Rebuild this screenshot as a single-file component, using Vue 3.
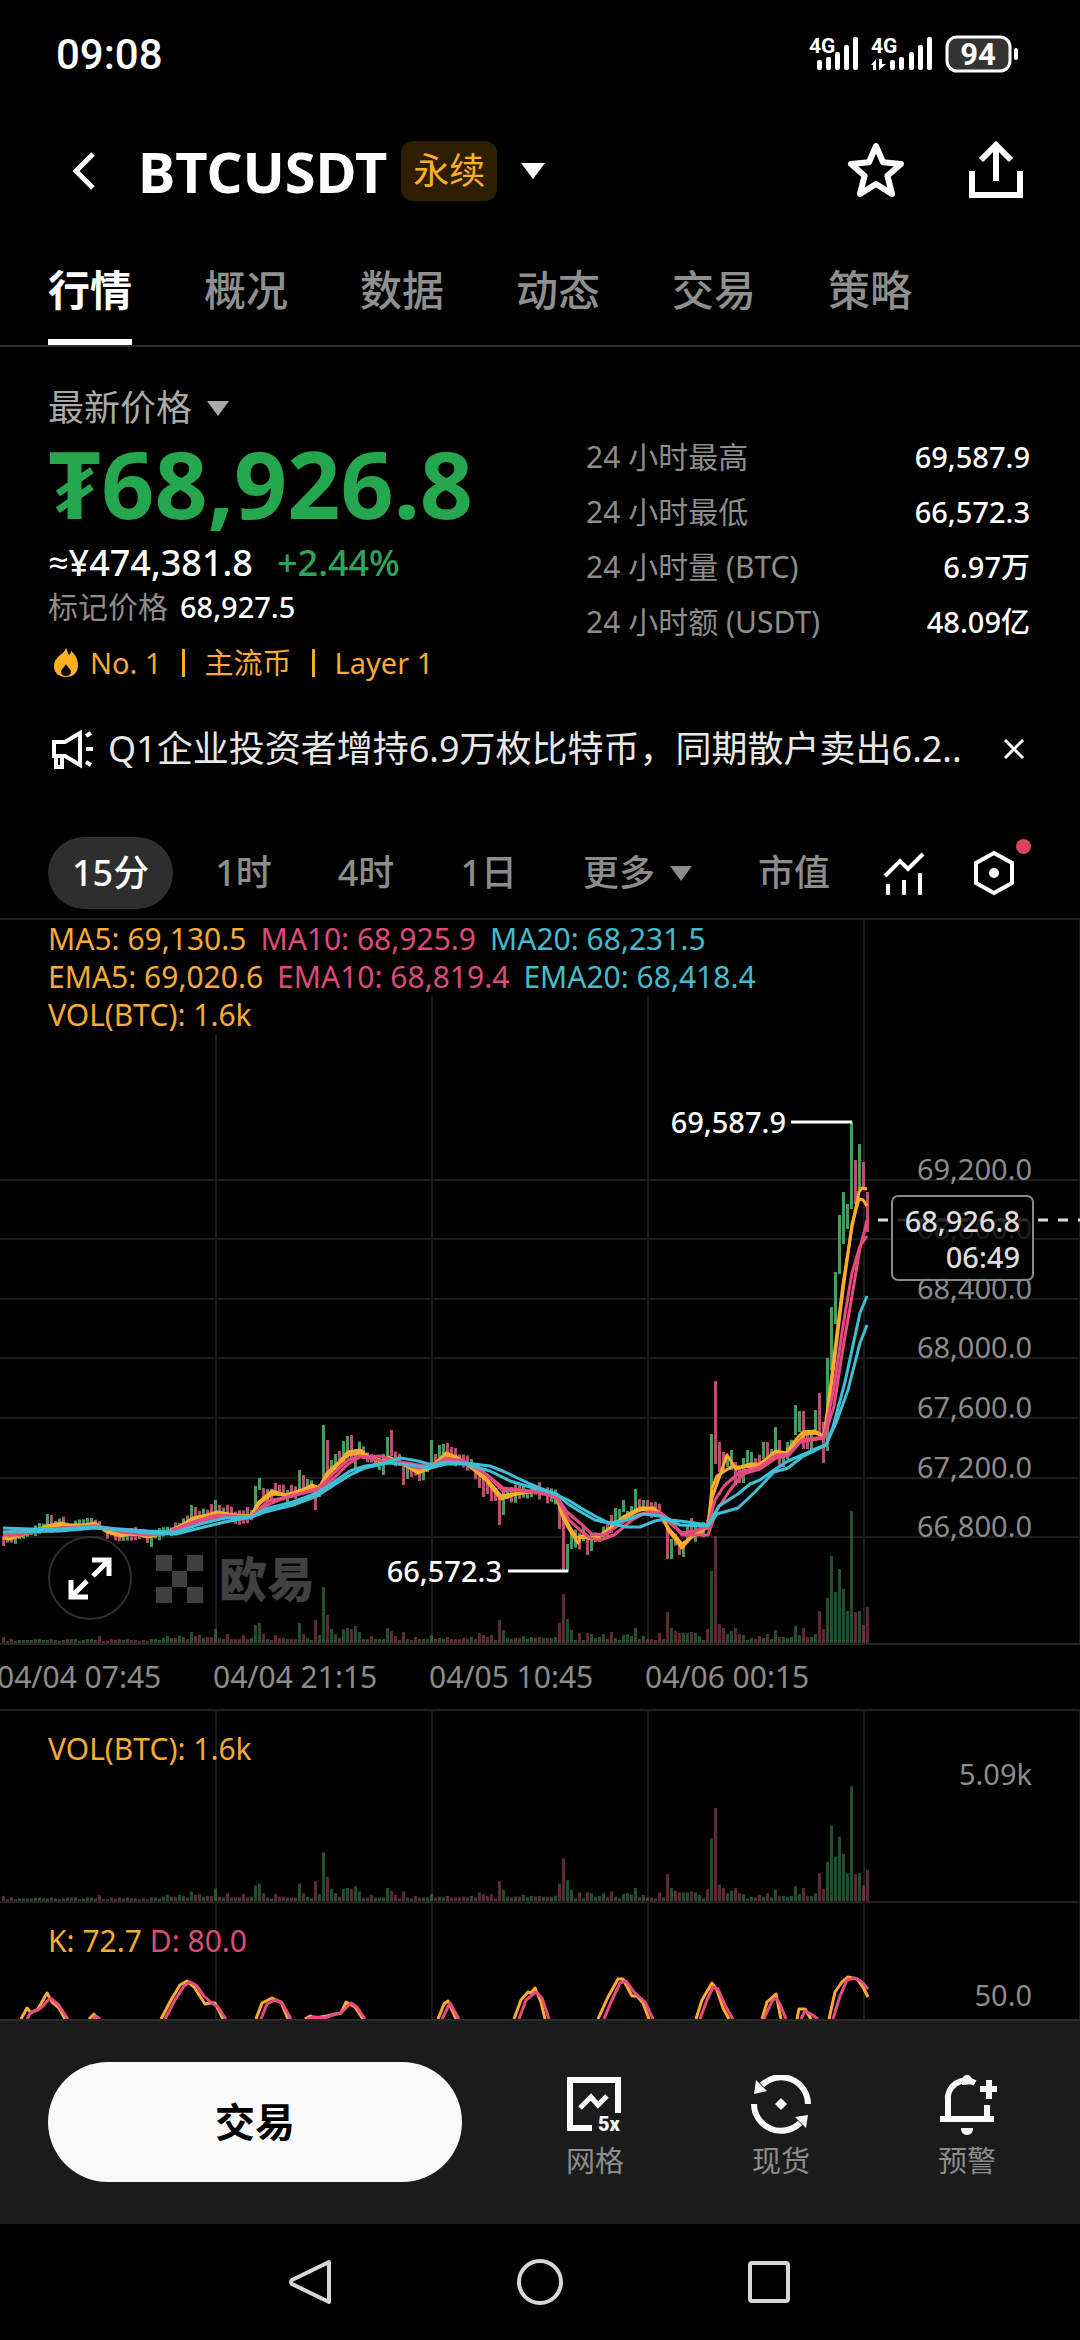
<script setup>
import { ref } from 'vue'

const tabs = ['行情', '概况', '数据', '动态', '交易', '策略']
const activeTab = ref('行情')

const stats = [
  { label: '24 小时最高', value: '69,587.9' },
  { label: '24 小时最低', value: '66,572.3' },
  { label: '24 小时量 (BTC)', value: '6.97万' },
  { label: '24 小时额 (USDT)', value: '48.09亿' },
]

const frames = ['15分', '1时', '4时', '1日']
const activeFrame = ref('15分')
const noticeOpen = ref(true)

const legend = [
  [
    { text: 'MA5: 69,130.5', tone: 'amber' },
    { text: 'MA10: 68,925.9', tone: 'pink' },
    { text: 'MA20: 68,231.5', tone: 'cyan' },
  ],
  [
    { text: 'EMA5: 69,020.6', tone: 'amber' },
    { text: 'EMA10: 68,819.4', tone: 'pink' },
    { text: 'EMA20: 68,418.4', tone: 'cyan' },
  ],
  [{ text: 'VOL(BTC): 1.6k', tone: 'amber' }],
]

const dates = ['04/04 07:45', '04/04 21:15', '04/05 10:45', '04/06 00:15']
const gridX = [216, 432, 648, 864, 1080]
const prices = [
  { y: 262, text: '69,200.0' },
  { y: 321, text: '68,800.0' },
  { y: 381, text: '68,400.0' },
  { y: 440, text: '68,000.0' },
  { y: 500, text: '67,600.0' },
  { y: 560, text: '67,200.0' },
  { y: 619, text: '66,800.0' },
]

const ma5 = [[3,620],[10,621],[19,618],[38,612],[46,608],[62,605],[74,609],[95,605],[107,614],[121,618],[134,615],[148,619],[165,615],[179,609],[193,600],[207,597],[217,594],[234,597],[251,598],[258,585],[272,573],[286,577],[296,575],[312,567],[319,570],[327,555],[339,544],[348,534],[360,532],[367,538],[382,545],[389,539],[401,545],[418,555],[430,550],[446,535],[458,540],[472,550],[486,562],[501,581],[513,577],[527,574],[540,572],[547,576],[557,580],[562,597],[569,611],[578,625],[581,618],[592,621],[602,617],[623,599],[640,590],[654,590],[661,597],[669,613],[682,630],[692,618],[702,614],[708,607],[712,580],[719,560],[727,537],[736,551],[750,546],[760,546],[776,533],[786,535],[798,519],[803,514],[815,513],[824,519],[831,464],[836,423],[843,366],[852,309],[859,274],[862,270],[867,271]]
const ema5 = [[3,617],[19,617],[46,609],[62,607],[95,607],[107,612],[121,616],[148,617],[165,615],[193,602],[217,596],[251,598],[260,585],[272,576],[286,577],[312,569],[319,570],[329,556],[348,537],[360,535],[382,543],[389,540],[401,545],[418,552],[430,549],[446,537],[458,541],[472,549],[486,560],[501,578],[513,576],[540,573],[557,580],[562,594],[569,608],[576,619],[592,620],[602,616],[623,601],[640,592],[654,591],[661,597],[669,611],[682,626],[692,619],[708,608],[712,570],[717,558],[731,549],[740,549],[760,548],[776,535],[786,536],[798,524],[805,516],[815,515],[824,518],[829,485],[835,438],[843,372],[852,306],[859,281],[863,282],[867,288]]
const ma10 = [[3,617],[19,617],[46,612],[74,610],[95,608],[107,610],[121,614],[148,617],[165,616],[179,612],[193,605],[217,599],[251,600],[265,588],[279,582],[293,577],[308,574],[319,572],[334,560],[348,546],[360,539],[380,538],[389,541],[401,545],[418,550],[430,549],[446,542],[460,542],[479,550],[490,560],[503,573],[517,572],[530,574],[540,573],[557,580],[569,602],[580,612],[590,620],[600,622],[614,617],[632,602],[647,594],[661,595],[672,604],[682,617],[695,617],[708,617],[717,592],[730,572],[743,556],[760,551],[776,540],[789,537],[800,524],[824,520],[834,488],[843,430],[852,378],[860,330],[864,315],[867,302]]
const ema10 = [[3,614],[46,611],[95,608],[121,613],[148,616],[165,615],[193,604],[217,597],[251,599],[268,583],[293,578],[319,570],[334,555],[348,542],[360,538],[382,543],[401,544],[430,549],[446,540],[465,544],[486,556],[503,570],[530,573],[557,579],[567,594],[580,605],[592,616],[604,617],[625,603],[640,596],[654,595],[665,601],[682,615],[695,613],[708,608],[715,582],[724,568],[740,554],[760,549],[776,537],[789,536],[802,522],[824,519],[833,475],[843,408],[852,355],[860,328],[867,318]]
const ma20 = [[3,614],[60,613],[95,610],[120,612],[148,615],[176,616],[200,610],[225,604],[251,599],[265,594],[293,587],[317,578],[334,567],[350,557],[365,550],[382,546],[389,543],[401,540],[418,543],[432,547],[446,544],[465,545],[490,548],[505,554],[530,566],[557,577],[568,582],[581,590],[595,598],[609,605],[626,609],[640,609],[655,603],[665,601],[680,607],[708,608],[717,596],[738,590],[755,574],[774,554],[788,550],[802,539],[826,527],[836,505],[848,472],[860,425],[867,407]]
const ema20 = [[3,610],[30,611],[60,611],[95,609],[120,611],[148,613],[176,614],[200,606],[225,600],[251,599],[265,591],[293,584],[317,575],[334,564],[350,553],[365,548],[389,545],[410,547],[430,550],[446,546],[465,546],[490,553],[510,563],[530,569],[557,576],[568,586],[581,594],[595,602],[609,605],[626,602],[643,596],[660,598],[671,602],[688,604],[708,607],[719,588],[738,576],[750,566],[760,562],[774,552],[788,543],[802,537],[815,531],[826,527],[833,509],[845,464],[860,395],[867,378]]

const lines = [
  { pts: ma5, tone: 'amber' },
  { pts: ema5, tone: 'amber' },
  { pts: ma10, tone: 'pink' },
  { pts: ema10, tone: 'pink' },
  { pts: ma20, tone: 'cyan' },
  { pts: ema20, tone: 'cyan' },
]

// index: [high, low, rising]
const wicks = {
  0: [618, 628, 0], 11: [596, 607, 1], 12: [597, 615, 0], 36: [612, 625, 0], 37: [618, 629, 1],
  47: [587, 602, 1], 48: [589, 603, 0], 49: [593, 602, 0], 52: [586, 600, 0], 53: [582, 600, 1], 54: [587, 600, 0],
  63: [568, 592, 1], 64: [560, 572, 1], 65: [570, 581, 0], 68: [565, 575, 0], 74: [552, 574, 1], 75: [557, 573, 0],
  76: [561, 572, 1], 78: [568, 592, 0], 79: [566, 579, 1], 80: [507, 569, 1], 81: [522, 562, 0], 82: [542, 556, 1],
  83: [536, 552, 1], 84: [533, 546, 0], 85: [523, 546, 1], 86: [518, 540, 1], 87: [517, 541, 0], 88: [535, 551, 1],
  96: [519, 540, 1], 97: [512, 538, 0], 95: [536, 557, 1], 100: [545, 567, 0], 101: [546, 561, 1], 104: [550, 563, 0],
  107: [522, 550, 1], 108: [536, 550, 0], 109: [527, 544, 1], 110: [526, 541, 1], 111: [525, 539, 0],
  119: [553, 570, 0], 120: [560, 579, 0], 121: [564, 576, 0], 122: [568, 583, 0], 123: [570, 583, 0],
  124: [579, 607, 0], 125: [569, 597, 1],
  139: [578, 611, 0], 140: [590, 652, 0], 141: [626, 654, 1], 142: [614, 631, 1], 146: [618, 637, 0], 147: [616, 633, 1],
  152: [597, 615, 0], 153: [590, 610, 1], 154: [591, 606, 1], 155: [582, 594, 1], 158: [571, 592, 1], 159: [581, 594, 0],
  160: [582, 593, 1], 161: [582, 593, 0], 166: [609, 641, 0], 167: [621, 641, 1], 169: [622, 637, 0], 170: [624, 639, 1],
  171: [606, 625, 1], 172: [600, 620, 0], 177: [516, 595, 1], 178: [463, 546, 0], 179: [524, 554, 0], 180: [534, 552, 0],
  181: [538, 549, 1], 182: [532, 552, 1], 183: [544, 567, 0], 184: [548, 565, 0], 185: [540, 565, 1], 186: [532, 547, 1],
  187: [534, 547, 1], 190: [524, 541, 1], 191: [524, 540, 0], 193: [509, 533, 1], 194: [522, 548, 0], 195: [533, 549, 1],
  198: [487, 517, 1], 199: [493, 514, 1], 200: [493, 531, 0], 201: [512, 531, 0], 202: [514, 532, 1], 203: [492, 514, 1],
  204: [475, 521, 0], 205: [504, 545, 0], 206: [440, 533, 1], 207: [389, 452, 1], 208: [354, 406, 1], 209: [297, 356, 1],
  210: [274, 326, 1], 211: [286, 311, 1], 212: [204, 291, 1], 213: [242, 286, 0], 214: [226, 272, 1], 215: [244, 272, 0],
  216: [274, 314, 0],
}

const volumes = {
  0: 6, 24: 7, 44: 7, 45: 6, 47: 11, 48: 7, 49: 8, 53: 14, 56: 9, 60: 8, 63: 18, 64: 20, 65: 9, 68: 8, 74: 20, 75: 9,
  78: 23, 79: 8, 80: 56, 81: 28, 82: 14, 83: 9, 85: 14, 86: 15, 87: 14, 88: 17, 89: 11, 96: 15, 97: 12, 98: 7,
  100: 11, 107: 8, 119: 10, 120: 8, 122: 8, 124: 23, 125: 13, 139: 20, 140: 49, 141: 24, 142: 13, 144: 10, 146: 10,
  147: 9, 150: 9, 152: 11, 155: 8, 156: 9, 158: 15, 164: 10, 166: 31, 167: 15, 168: 12, 169: 10, 170: 10, 171: 10,
  172: 11, 173: 10, 176: 14, 177: 72, 178: 107, 179: 19, 180: 15, 181: 9, 182: 12, 183: 15, 184: 9, 185: 8, 191: 9,
  193: 13, 198: 17, 199: 8, 200: 15, 203: 9, 204: 32, 205: 14, 206: 45, 207: 87, 208: 51, 209: 74, 210: 54, 211: 32,
  212: 132, 213: 31, 214: 32, 215: 18, 216: 36,
}

function noise(n) {
  const v = Math.sin(n * 12.9898) * 43758.5453
  return v - Math.floor(v)
}

function valueAt(pts, x) {
  for (let i = 1; i < pts.length; i++) {
    if (x <= pts[i][0]) {
      const [x0, y0] = pts[i - 1]
      const [x1, y1] = pts[i]
      return y0 + ((y1 - y0) * (x - x0)) / (x1 - x0)
    }
  }
  return pts[pts.length - 1][1]
}

const candles = Array.from({ length: 217 }, (_, i) => {
  const x = 2 + i * 4
  const mid = valueAt(ma5, x + 1)
  const quiet = i < 45 ? 0.7 : 1
  const rising = valueAt(ma5, x + 4) < mid ? noise(i) > 0.3 : noise(i) > 0.65
  const wick = wicks[i] || [
    mid - (2 + noise(i + 300) * 8) * quiet,
    mid + (2 + noise(i + 600) * 8) * quiet,
    rising ? 1 : 0,
  ]
  const base = i < 40 ? 2 : 3
  const volume = volumes[i] || base + Math.round(noise(i + 900) * (i < 40 ? 2 : 4))
  return { x, high: wick[0], low: wick[1], up: wick[2] === 1, volume }
})

const kWaves = [
  [[21,118],[27,107],[31,112],[38,108],[47,92],[52,101],[59,107],[65,118]],
  [[89,118],[94,113],[97,118]],
  [[161,118],[171,99],[180,84],[187,80],[194,86],[205,103],[210,102],[215,102],[223,118]],
  [[256,118],[262,102],[272,97],[281,101],[288,118]],
  [[305,118],[310,115],[315,117],[327,115],[341,112],[346,101],[355,106],[363,118]],
  [[438,118],[444,103],[448,100],[456,118]],
  [[514,118],[521,99],[528,91],[531,92],[535,87],[541,101],[545,118]],
  [[598,118],[603,107],[608,96],[618,78],[623,78],[632,95],[637,95],[643,102],[649,118]],
  [[696,118],[702,99],[712,82],[717,89],[723,107],[729,118]],
  [[762,118],[767,101],[776,93],[781,118]],
  [[797,118],[799,108],[805,108],[811,118]],
  [[829,118],[835,91],[842,81],[848,76],[857,78],[863,86],[868,96]],
]
const dWaves = [
  [[27,118],[31,111],[38,109],[43,105],[50,97],[58,103],[68,118]],
  [[93,118],[96,115],[100,118]],
  [[165,118],[175,99],[184,85],[190,81],[196,84],[204,95],[213,103],[218,106],[226,118]],
  [[261,118],[267,103],[275,99],[282,102],[291,118]],
  [[307,118],[314,116],[325,117],[335,113],[341,112],[351,102],[357,106],[365,118]],
  [[442,118],[450,102],[459,118]],
  [[519,118],[526,99],[536,91],[542,97],[549,118]],
  [[604,118],[611,101],[620,82],[626,80],[634,91],[645,101],[653,118]],
  [[700,118],[707,99],[713,86],[718,88],[726,106],[733,118]],
  [[764,118],[772,100],[776,97],[780,103],[786,118]],
  [[801,118],[805,110],[811,113],[818,118]],
  [[833,118],[840,95],[847,79],[855,77],[862,81],[868,88]],
]

const toPoints = (pts) => pts.map((p) => p.join(',')).join(' ')
</script>

<template>
  <div class="screen">
    <div class="status">
      <span class="clock">09:08</span>
      <svg class="status-icons" viewBox="0 0 216 44" width="216" height="44" fill="#fff">
        <text x="3" y="21" class="net">4G</text>
        <g>
          <rect x="11" y="28" width="5" height="10" rx="2" /><rect x="20" y="25" width="5" height="13" rx="2" />
          <rect x="29" y="20" width="5" height="18" rx="2" /><rect x="38" y="13" width="5" height="25" rx="2" />
          <rect x="47" y="5" width="5" height="33" rx="2" />
        </g>
        <text x="65" y="21" class="net">4G</text>
        <path d="M65 33l5-6v11h-3v-5zM73 27h3v5h4l-7 6z" />
        <g>
          <rect x="84" y="28" width="5" height="10" rx="2" /><rect x="93" y="25" width="5" height="13" rx="2" />
          <rect x="103" y="20" width="5" height="18" rx="2" /><rect x="112" y="13" width="5" height="25" rx="2" />
          <rect x="121" y="5" width="5" height="33" rx="2" />
        </g>
        <rect x="141" y="5" width="63" height="34" rx="10" fill="#333" stroke="#fff" stroke-width="3" />
        <rect x="208" y="16" width="4" height="12" rx="2" />
        <text x="172" y="33" text-anchor="middle" class="battery">94</text>
      </svg>
    </div>

    <header class="header">
      <button class="back" aria-label="返回">
        <svg viewBox="0 0 48 48" width="48" height="48"><path d="M33 7L16 24l17 17" fill="none" stroke="#fff" stroke-width="5" /></svg>
      </button>
      <h1>BTCUSDT</h1>
      <span class="badge">永续</span>
      <button class="pick" aria-label="切换交易对">
        <svg viewBox="0 0 24 16" width="24" height="16"><path d="M0 0h24L12 16z" fill="#fff" /></svg>
      </button>
      <div class="actions">
        <button aria-label="收藏">
          <svg viewBox="0 0 64 64" width="64" height="64"><path d="M32 7L39 23.3L57 25L43.4 36.7L48 55L32 45L16 55L20.6 36.7L7 25L25 23.3Z" fill="none" stroke="#fff" stroke-width="6" stroke-linejoin="round" /></svg>
        </button>
        <button aria-label="分享">
          <svg viewBox="0 0 64 64" width="64" height="64" fill="none" stroke="#fff" stroke-width="6"><path d="M8 32V56H56V32M32 8V42M17 21L32 6L47 21" /></svg>
        </button>
      </div>
    </header>

    <nav class="tabs">
      <button v-for="t in tabs" :key="t" :class="{ active: t === activeTab }" @click="activeTab = t">{{ t }}</button>
    </nav>

    <section class="summary">
      <div class="quote">
        <button class="price-kind">最新价格
          <svg viewBox="0 0 22 15" width="22" height="15"><path d="M0 0h22L11 15z" fill="#aaa" /></svg>
        </button>
        <div class="price">₮68,926.8</div>
        <div class="fiat"><span>≈¥474,381.8</span><span class="up">+2.44%</span></div>
        <div class="mark"><span>标记价格</span><b>68,927.5</b></div>
        <div class="tags">
          <svg viewBox="0 0 24 30" width="24" height="30"><path fill="#ffb020" fill-rule="evenodd" d="M12 0c2 3 1 5 3 7 1-1 2-2 2-4 5 4 7 9 7 14 0 8-5 12-12 12S0 25 0 18c0-5 3-8 6-11 3-2 5-4 6-7zM12 16c-1 3-5 5-5 8 0 2 2 4 5 4s5-2 5-4c0-3-4-5-5-8z" /></svg>
          <span>No. 1</span><i></i><span>主流币</span><i></i><span>Layer 1</span>
        </div>
      </div>
      <dl class="stats">
        <div v-for="s in stats" :key="s.label"><dt>{{ s.label }}</dt><dd>{{ s.value }}</dd></div>
      </dl>
    </section>

    <div class="notice">
      <template v-if="noticeOpen">
        <svg viewBox="0 0 48 48" width="48" height="48" fill="none" stroke="#fff" stroke-width="4">
          <path d="M6 17H17L32 8V40L17 31H6ZM8 31V42H14V32M38 11l5-3M38 24h7M38 37l5 3" />
        </svg>
        <a href="#">Q1企业投资者增持6.9万枚比特币，同期散户卖出6.2..</a>
        <button aria-label="关闭" @click="noticeOpen = false">
          <svg viewBox="0 0 24 24" width="24" height="24"><path d="M3 3l18 18M21 3L3 21" stroke="#fff" stroke-width="3" /></svg>
        </button>
      </template>
    </div>

    <div class="frames">
      <button v-for="f in frames" :key="f" :class="{ active: f === activeFrame }" @click="activeFrame = f">{{ f }}</button>
      <button class="more">更多
        <svg viewBox="0 0 22 15" width="22" height="15"><path d="M0 0h22L11 15z" fill="#8c8c8c" /></svg>
      </button>
      <button>市值</button>
      <div class="frame-icons">
        <button aria-label="指标">
          <svg viewBox="0 0 48 48" width="48" height="48" fill="none" stroke="#fff" stroke-width="4">
            <path d="M5 27L20 12L28 20L43 5M8 35v11M24 31v15M40 24v22" />
          </svg>
        </button>
        <button class="settings" aria-label="设置">
          <svg viewBox="0 0 48 48" width="48" height="48"><path d="M24 4L42 14V34L24 44L6 34V14Z" fill="none" stroke="#fff" stroke-width="4" /><circle cx="24" cy="24" r="5" fill="#fff" /></svg>
        </button>
      </div>
    </div>

    <section class="chart">
      <div class="legend">
        <div v-for="(row, r) in legend" :key="r" class="legend-row">
          <span v-for="l in row" :key="l.text" :class="l.tone">{{ l.text }}</span>
        </div>
      </div>
      <svg class="plot" viewBox="0 0 1080 725">
        <g class="grid">
          <path v-for="x in gridX" :key="x" :d="`M${x} 0V725`" />
          <path v-for="p in prices" :key="p.y" :d="`M0 ${p.y}H1080`" />
        </g>
        <g class="water">
          <rect x="156" y="637" width="16" height="16" /><rect x="187" y="637" width="16" height="16" />
          <rect x="172" y="653" width="15" height="16" />
          <rect x="156" y="669" width="16" height="16" /><rect x="187" y="669" width="16" height="16" />
          <text x="219" y="679">欧易</text>
        </g>
        <g opacity="0.5">
          <rect v-for="c in candles" :key="c.x" :x="c.x" :y="725 - c.volume" width="3" :height="c.volume" :class="c.up ? 'rise' : 'fall'" />
        </g>
        <rect v-for="c in candles" :key="c.x" :x="c.x" :y="c.high" width="3" :height="c.low - c.high" :class="c.up ? 'rise' : 'fall'" />
        <polyline v-for="(l, i) in lines" :key="i" :points="toPoints(l.pts)" :class="['line', l.tone]" />
        <text v-for="p in prices" :key="p.text" x="1032" :y="p.y" class="axis">{{ p.text }}</text>
        <path d="M791 204H852M508 653H568" stroke="#fff" stroke-width="3" />
        <text x="786" y="215" class="peak">69,587.9</text>
        <text x="502" y="664" class="peak">66,572.3</text>
        <path d="M878 302H1080" stroke="#ddd" stroke-width="3" stroke-dasharray="10 10" />
        <rect x="892" y="278" width="141" height="84" rx="6" fill="#000" fill-opacity="0.8" stroke="#888" stroke-width="2" />
        <text x="1020" y="314" class="tag">68,926.8</text>
        <text x="1020" y="350" class="tag">06:49</text>
      </svg>
      <button class="expand" aria-label="全屏">
        <svg viewBox="0 0 44 44" width="44" height="44" fill="none" stroke="#fff" stroke-width="5"><path d="M25 20L39 6M24 4H41V20M19 25L5 39M20 41H3V24" /></svg>
      </button>
    </section>

    <div class="dates"><span v-for="d in dates" :key="d">{{ d }}</span></div>

    <section class="panel">
      <div class="panel-label"><span class="amber">VOL(BTC): 1.6k</span></div>
      <svg class="plot" viewBox="0 0 1080 192">
        <g class="grid"><path v-for="x in gridX" :key="x" :d="`M${x} 0V192`" /></g>
        <g opacity="0.5">
          <rect v-for="c in candles" :key="c.x" :x="c.x" :y="192 - c.volume * 0.87" width="3" :height="c.volume * 0.87" :class="c.up ? 'rise' : 'fall'" />
        </g>
        <text x="1032" y="76" class="axis">5.09k</text>
      </svg>
    </section>

    <section class="panel">
      <div class="panel-label"><span class="amber">K: 72.7</span> <span class="pink">D: 80.0</span></div>
      <svg class="plot" viewBox="0 0 1080 118">
        <g class="grid"><path v-for="x in gridX" :key="x" :d="`M${x} 0V118`" /></g>
        <polyline v-for="(w, i) in kWaves" :key="'k' + i" :points="toPoints(w)" class="line amber" />
        <polyline v-for="(w, i) in dWaves" :key="'d' + i" :points="toPoints(w)" class="line pink" />
        <text x="1032" y="105" class="axis">50.0</text>
      </svg>
    </section>

    <footer class="bar">
      <button class="trade">交易</button>
      <button class="tool">
        <svg viewBox="0 0 60 60" width="60" height="60" fill="none" stroke="#fafafa" stroke-width="6">
          <path d="M53 38V5H5V53H27" /><path d="M15 33L26 22L33 30L42 21" stroke-width="5" />
          <text x="33" y="56" class="lever">5x</text>
        </svg>
        <span>网格</span>
      </button>
      <button class="tool">
        <svg viewBox="0 0 60 60" width="60" height="60" fill="none" stroke="#fafafa" stroke-width="6">
          <path d="M57 29A27 27 0 0 0 11 10M3 29A27 27 0 0 0 49 48" />
          <path d="M5 5L3 19L16 16ZM55 53L57 40L44 42ZM30 23L36 29L30 35L24 29Z" fill="#fafafa" stroke="none" />
        </svg>
        <span>现货</span>
      </button>
      <button class="tool">
        <svg viewBox="0 0 60 60" width="60" height="60" fill="none" stroke="#fafafa" stroke-width="6">
          <path d="M3 44H57M11 44V26A18 18 0 0 1 38 8M50 30V44M43 14H60M52 5V24" />
          <path d="M24 53H36C36 57 34 60 30 60S24 57 24 53ZM25 5A5 5 0 0 1 35 5L38 9L25 10Z" fill="#fafafa" stroke="none" />
        </svg>
        <span>预警</span>
      </button>
    </footer>

    <nav class="system">
      <button aria-label="后退"><svg viewBox="0 0 48 52" width="48" height="52"><path d="M42 6V46L5 28Q3 26 5 24Z" /></svg></button>
      <button aria-label="主页"><svg viewBox="0 0 52 52" width="52" height="52"><circle cx="26" cy="26" r="21" /></svg></button>
      <button aria-label="最近任务"><svg viewBox="0 0 48 52" width="48" height="52"><rect x="5" y="7" width="38" height="38" rx="2" /></svg></button>
    </nav>
  </div>
</template>

<style>
body {
  background: #000;
}
</style>

<style scoped>
.screen {
  background: #000;
  color: #fff;
  font-family: "Noto Sans", "Open Sans", "Noto Sans CJK SC", sans-serif;
  font-size: 29px;
  overflow: hidden;
}
button {
  background: none;
  border: 0;
  margin: 0;
  padding: 0;
  color: inherit;
  font: inherit;
  cursor: pointer;
}
svg {
  display: block;
  flex: none;
}

.status {
  display: flex;
  align-items: center;
  justify-content: space-between;
  height: 108px;
  padding: 0 58px 0 56px;
}
.clock {
  font-family: Roboto, sans-serif;
  font-size: 42px;
  font-weight: 500;
}
.net {
  font: 700 21px Roboto, sans-serif;
}
.battery {
  font: 700 31px Roboto, sans-serif;
}

.header {
  display: flex;
  align-items: center;
  height: 126px;
  padding: 0 52px 0 60px;
}
.back {
  width: 78px;
}
h1 {
  margin: 0;
  font-size: 56px;
  line-height: 60px;
  font-weight: 700;
}
.badge {
  margin-left: 14px;
  padding: 0 12px;
  border-radius: 12px;
  background: #2e1e00;
  color: #ffb020;
  font-size: 36px;
  line-height: 60px;
}
.pick {
  margin-left: 24px;
}
.actions {
  display: flex;
  gap: 56px;
  margin-left: auto;
}

.tabs {
  display: flex;
  gap: 72px;
  padding: 0 48px;
  border-bottom: 2px solid #2a2a2a;
}
.tabs button {
  position: relative;
  height: 111px;
  color: #8f8f8f;
  font-size: 42px;
  font-weight: 500;
  line-height: 60px;
}
.tabs .active {
  color: #fff;
  font-weight: 700;
}
.tabs .active::after {
  content: "";
  position: absolute;
  left: 0;
  right: 0;
  bottom: 0;
  height: 6px;
  background: #fff;
}

.summary {
  display: grid;
  grid-template-columns: 537fr 443fr;
  padding: 37px 50px 0 48px;
}
.price-kind {
  display: flex;
  align-items: center;
  gap: 15px;
  color: #aaa;
  font-size: 36px;
  line-height: 48px;
}
.price {
  color: #25a750;
  font-size: 93px;
  font-weight: 700;
  line-height: 102px;
  white-space: nowrap;
}
.fiat {
  display: flex;
  gap: 24px;
  font-size: 36px;
  font-weight: 500;
  line-height: 58px;
}
.up {
  color: #2ea35c;
}
.mark {
  display: flex;
  gap: 12px;
  line-height: 30px;
}
.mark span {
  color: #8c8c8c;
  font-size: 30px;
}
.mark b {
  font-weight: 500;
}
.tags {
  display: flex;
  align-items: center;
  gap: 20px;
  margin-top: 18px;
  padding-left: 6px;
  color: #f5ab35;
  line-height: 46px;
}
.tags svg + span {
  margin-left: -8px;
}
.tags i {
  width: 3px;
  height: 28px;
  background: #f5ab35;
}
.stats {
  margin: 0;
  padding-top: 45px;
}
.stats div {
  display: flex;
  justify-content: space-between;
  line-height: 55px;
}
.stats dt {
  color: #8c8c8c;
  font-size: 30px;
}
.stats dd {
  margin: 0;
  font-weight: 500;
}

.notice {
  display: flex;
  align-items: center;
  gap: 12px;
  height: 72px;
  margin-top: 27px;
  padding: 0 54px 0 48px;
}
.notice a {
  flex: 1;
  color: #e8e8e8;
  font-size: 36px;
  line-height: 44px;
  text-decoration: none;
  white-space: nowrap;
}

.frames {
  display: flex;
  align-items: center;
  gap: 18px;
  margin-top: 52px;
  padding: 0 62px 9px 48px;
}
.frames > button {
  height: 72px;
  padding: 0 24px;
  border-radius: 36px;
  color: #8c8c8c;
  font-size: 36px;
  font-weight: 500;
  line-height: 48px;
  white-space: nowrap;
}
.frames > .active {
  background: #2e2e2e;
  color: #fff;
}
.frames .more {
  display: flex;
  align-items: center;
  gap: 15px;
}
.frame-icons {
  display: flex;
  gap: 42px;
  margin-left: auto;
}
.settings {
  position: relative;
}
.settings::after {
  content: "";
  position: absolute;
  top: -10px;
  right: -13px;
  width: 15px;
  height: 15px;
  border-radius: 50%;
  background: #dd4259;
}

.chart {
  position: relative;
  box-shadow: inset 0 2px #1f1f1f;
}
.plot {
  width: 100%;
  height: auto;
}
.legend {
  position: absolute;
  top: 2px;
  left: 48px;
}
.legend-row {
  display: flex;
  gap: 14px;
  width: max-content;
  background: #000;
  font-size: 30px;
  line-height: 38px;
  white-space: nowrap;
}
.amber {
  color: #f5ab35;
}
.pink {
  color: #dc4a7b;
}
.cyan {
  color: #41bccf;
}
.grid path {
  stroke: #1d1d1d;
  stroke-width: 2;
}
.water {
  fill: #404040;
}
.water text {
  font: 900 48px "Noto Sans CJK SC", sans-serif;
}
.rise {
  fill: #459c5c;
}
.fall {
  fill: #b75069;
}
.line {
  fill: none;
  stroke-width: 3;
  stroke-linejoin: round;
}
.line.amber {
  stroke: #ffab2e;
}
.line.pink {
  stroke: #e64a80;
}
.line.cyan {
  stroke: #3fbfd6;
}
.axis {
  fill: #8c8c8c;
  font-size: 29px;
  text-anchor: end;
}
.peak {
  fill: #fff;
  font-size: 29px;
  font-weight: 500;
  text-anchor: end;
}
.tag {
  fill: #ddd;
  font-size: 29px;
  font-weight: 500;
  text-anchor: end;
}
.expand {
  position: absolute;
  left: 48px;
  bottom: 23px;
  display: flex;
  align-items: center;
  justify-content: center;
  width: 84px;
  height: 84px;
  border: 2px solid #2e2e2e;
  border-radius: 50%;
}

.dates {
  display: grid;
  grid-template-columns: repeat(5, 1fr);
  border-top: 2px solid #262626;
  color: #8c8c8c;
  font-size: 30px;
  line-height: 64px;
  text-indent: -3px;
  white-space: nowrap;
}
.panel {
  position: relative;
  box-shadow: inset 0 2px #222;
}
.panel-label {
  position: absolute;
  top: 20px;
  left: 48px;
  font-size: 30px;
  line-height: 40px;
}

.bar {
  display: flex;
  align-items: flex-start;
  height: 205px;
  box-sizing: border-box;
  padding: 43px 20px 0 48px;
  background: #1b1b1b;
  box-shadow: inset 0 2px #2b2b2b;
}
.trade {
  flex: 0 0 41%;
  max-width: 414px;
  height: 120px;
  margin-right: 40px;
  border-radius: 60px;
  background: #fafafa;
  color: #000;
  font-size: 40px;
  font-weight: 700;
  line-height: 48px;
}
.tool {
  flex: 1;
  display: flex;
  flex-direction: column;
  align-items: center;
  gap: 4px;
  padding-top: 13px;
  color: #8c8c8c;
  line-height: 44px;
}
.lever {
  fill: #fafafa;
  stroke: none;
  font: 900 20px Roboto, sans-serif;
}

.system {
  display: flex;
  align-items: center;
  justify-content: center;
  gap: 179px;
  height: 116px;
}
.system svg {
  fill: none;
  stroke: #d6d6d6;
  stroke-width: 4;
  stroke-linejoin: round;
}
</style>
